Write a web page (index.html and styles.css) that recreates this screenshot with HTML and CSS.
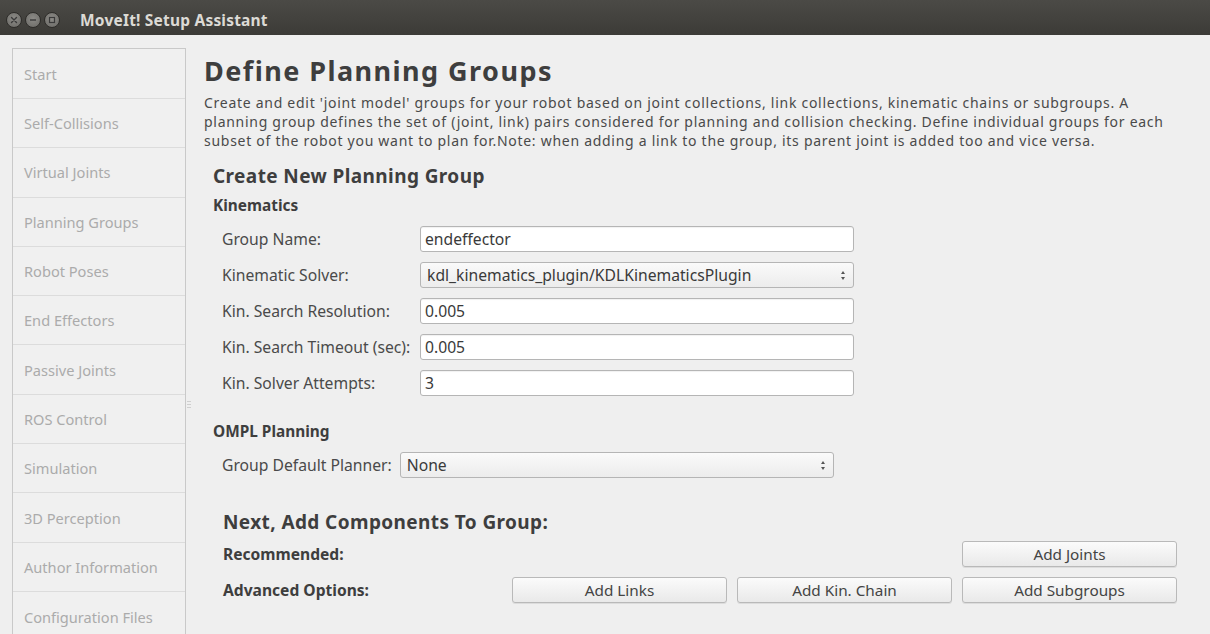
FILE: index.html
```html
<!DOCTYPE html>
<html lang="en">
<head>
<meta charset="utf-8">
<title>MoveIt! Setup Assistant</title>
<link rel="stylesheet" href="styles.css">
</head>
<body>
<div class="window">
  <header class="titlebar">
    <div class="wm-buttons">
      <span class="wm-btn wm-close">
        <svg width="8" height="8" viewBox="0 0 8 8"><path d="M1.5 1.5 L6.5 6.5 M6.5 1.5 L1.5 6.5" stroke="#3a3a3a" stroke-width="1.4" stroke-linecap="round"/></svg>
      </span>
      <span class="wm-btn">
        <svg width="8" height="8" viewBox="0 0 8 8"><path d="M1 4 H7" stroke="#3a3a3a" stroke-width="1.4"/></svg>
      </span>
      <span class="wm-btn">
        <svg width="8" height="8" viewBox="0 0 8 8"><rect x="1.5" y="1.5" width="5" height="5" fill="none" stroke="#3a3a3a" stroke-width="1.2"/></svg>
      </span>
    </div>
    <div class="wm-title">MoveIt! Setup Assistant</div>
  </header>

  <div class="body">
    <nav class="sidebar">
      <div class="nav-item">Start</div>
      <div class="nav-item">Self-Collisions</div>
      <div class="nav-item">Virtual Joints</div>
      <div class="nav-item">Planning Groups</div>
      <div class="nav-item">Robot Poses</div>
      <div class="nav-item">End Effectors</div>
      <div class="nav-item">Passive Joints</div>
      <div class="nav-item">ROS Control</div>
      <div class="nav-item">Simulation</div>
      <div class="nav-item">3D Perception</div>
      <div class="nav-item">Author Information</div>
      <div class="nav-item">Configuration Files</div>
    </nav>

    <div class="splitter"><span class="grip"></span></div>

    <main class="content">
      <h1 class="page-title">Define Planning Groups</h1>
      <p class="page-desc">Create and edit 'joint model' groups for your robot based on joint collections, link collections, kinematic chains or subgroups. A<br>planning group defines the set of (joint, link) pairs considered for planning and collision checking. Define individual groups for each<br>subset of the robot you want to plan for.Note: when adding a link to the group, its parent joint is added too and vice versa.</p>

      <section class="group-form">
        <h2 class="section-title">Create New Planning Group</h2>
        <h3 class="sub-title">Kinematics</h3>
        <div class="form-rows">
          <div class="form-row">
            <label class="form-label">Group Name:</label>
            <div class="field">endeffector</div>
          </div>
          <div class="form-row">
            <label class="form-label">Kinematic Solver:</label>
            <div class="field combo">kdl_kinematics_plugin/KDLKinematicsPlugin<span class="spin"><i class="up"></i><i class="down"></i></span></div>
          </div>
          <div class="form-row">
            <label class="form-label">Kin. Search Resolution:</label>
            <div class="field">0.005</div>
          </div>
          <div class="form-row">
            <label class="form-label">Kin. Search Timeout (sec):</label>
            <div class="field">0.005</div>
          </div>
          <div class="form-row">
            <label class="form-label">Kin. Solver Attempts:</label>
            <div class="field">3</div>
          </div>
        </div>

        <h3 class="sub-title ompl">OMPL Planning</h3>
        <div class="form-row planner-row">
          <label class="form-label">Group Default Planner:</label>
          <div class="field combo planner">None<span class="spin"><i class="up"></i><i class="down"></i></span></div>
        </div>
      </section>

      <section class="components">
        <h2 class="section-title">Next, Add Components To Group:</h2>
        <div class="comp-row first">
          <span class="comp-label">Recommended:</span>
          <div class="btns">
            <button class="btn">Add Joints</button>
          </div>
        </div>
        <div class="comp-row">
          <span class="comp-label">Advanced Options:</span>
          <div class="btns">
            <button class="btn">Add Links</button>
            <button class="btn">Add Kin. Chain</button>
            <button class="btn">Add Subgroups</button>
          </div>
        </div>
      </section>
    </main>
  </div>
</div>
</body>
</html>
```

FILE: styles.css
```css
* { box-sizing: border-box; }

html, body {
  margin: 0;
  padding: 0;
  width: 1210px;
  height: 634px;
  overflow: hidden;
  background: #efefef;
  font-family: "Noto Sans", "Open Sans", sans-serif;
}

.window {
  display: flex;
  flex-direction: column;
  height: 634px;
  overflow: hidden;
}

/* ---------- title bar ---------- */
.titlebar {
  height: 35px;
  flex: none;
  display: flex;
  align-items: center;
  background: linear-gradient(#4b4a46, #3c3b37);
  padding-left: 6px;
  padding-top: 5px;
}
.wm-buttons {
  display: flex;
  gap: 3px;
}
.wm-btn {
  width: 16px;
  height: 16px;
  border-radius: 50%;
  background: radial-gradient(circle at 50% 40%, #8c8b87, #6a6965);
  border: 1px solid #2e2d2a;
  display: flex;
  align-items: center;
  justify-content: center;
}
.wm-btn svg { display: block; }
.wm-title {
  margin-left: 20px;
  color: #dcdad5;
  font-weight: 700;
  font-size: 15.5px;
  letter-spacing: 0.2px;
}

/* ---------- body ---------- */
.body {
  flex: 1;
  display: flex;
  min-height: 0;
}

.sidebar {
  flex: none;
  width: 174px;
  margin-left: 12px;
  margin-top: 13px;
  border: 1px solid #c9c9c9;
  border-bottom: none;
  background: #f0f0f0;
  display: flex;
  flex-direction: column;
  overflow: hidden;
}
.nav-item {
  flex: none;
  height: 49.3px;
  display: flex;
  align-items: center;
  padding-left: 11px;
  font-size: 14.6px;
  color: #ababab;
  border-bottom: 1px solid #dcdcdc;
}
.nav-item:first-child { height: 50px; }
.nav-item:last-child { border-bottom: none; }

.splitter {
  flex: none;
  width: 6px;
  display: flex;
  justify-content: center;
  padding-top: 366px;
}
.grip {
  width: 4px;
  height: 7px;
  background: repeating-linear-gradient(#cfcfcf 0 1px, transparent 1px 3px);
}

/* ---------- main content ---------- */
.content {
  flex: 1;
  padding-left: 12px;
  padding-right: 33px;
  color: #444;
}

.page-title {
  margin: 21px 0 0;
  font-size: 27px;
  line-height: 30px;
  font-weight: 700;
  color: #3e3e3e;
  letter-spacing: 1.45px;
}
.page-desc {
  margin: 7px 0 0;
  font-size: 14px;
  line-height: 19px;
  letter-spacing: 0.72px;
  color: #4a4a4a;
  white-space: nowrap;
}

.group-form { padding-left: 9px; }

.section-title {
  margin: 0;
  font-size: 19px;
  font-weight: 700;
  color: #3e3e3e;
  letter-spacing: 0.4px;
  line-height: 22px;
}
.group-form .section-title { margin-top: 15px; }
.sub-title {
  margin: 10px 0 0;
  font-size: 15.4px;
  line-height: 18px;
  font-weight: 700;
  color: #3e3e3e;
}
.sub-title.ompl { margin-top: 27px; }

.form-rows {
  margin-top: 11px;
  display: flex;
  flex-direction: column;
  gap: 10px;
}
.form-row {
  display: flex;
  align-items: center;
  height: 26px;
  padding-left: 9px;
}
.form-label {
  width: 198px;
  flex: none;
  font-size: 15.7px;
  color: #4a4a4a;
  white-space: nowrap;
}
.field {
  width: 434px;
  height: 26px;
  border: 1px solid #b5b5b5;
  border-radius: 3px;
  background: #fff;
  display: flex;
  align-items: center;
  padding-left: 4px;
  font-size: 15.7px;
  color: #3a3a3a;
  box-shadow: inset 0 1px 1px rgba(0, 0, 0, 0.06);
}
.combo {
  position: relative;
  background: linear-gradient(#fafafa, #ececec);
  box-shadow: none;
  padding-left: 6px;
}
.spin {
  position: absolute;
  right: 8px;
  top: 8px;
  display: flex;
  flex-direction: column;
  gap: 3px;
}
.spin i {
  display: block;
  width: 0;
  height: 0;
  border-left: 2.5px solid transparent;
  border-right: 2.5px solid transparent;
}
.spin .up { border-bottom: 3px solid #555; }
.spin .down { border-top: 3px solid #555; }

.planner-row { margin-top: 11px; }
.planner-row .form-label { width: auto; margin-right: 8px; }
.planner { width: 434px; }

/* ---------- components ---------- */
.components {
  padding-left: 19px;
  margin-top: 33px;
}
.comp-row {
  display: flex;
  align-items: center;
  height: 26px;
  margin-top: 10px;
}
.comp-row.first { margin-top: 8px; }
.comp-label {
  font-size: 15.6px;
  font-weight: 700;
  color: #3e3e3e;
  flex: 1;
}
.btns {
  display: flex;
  gap: 10px;
}
.btn {
  width: 215px;
  height: 26px;
  border: 1px solid #b9b9b9;
  border-radius: 3px;
  background: linear-gradient(#fbfbfb, #e9e9e9);
  font-family: "Noto Sans", "Open Sans", sans-serif;
  font-size: 15.3px;
  color: #444;
  padding: 0;
  box-shadow: 0 1px 0 rgba(0, 0, 0, 0.08);
}
```
